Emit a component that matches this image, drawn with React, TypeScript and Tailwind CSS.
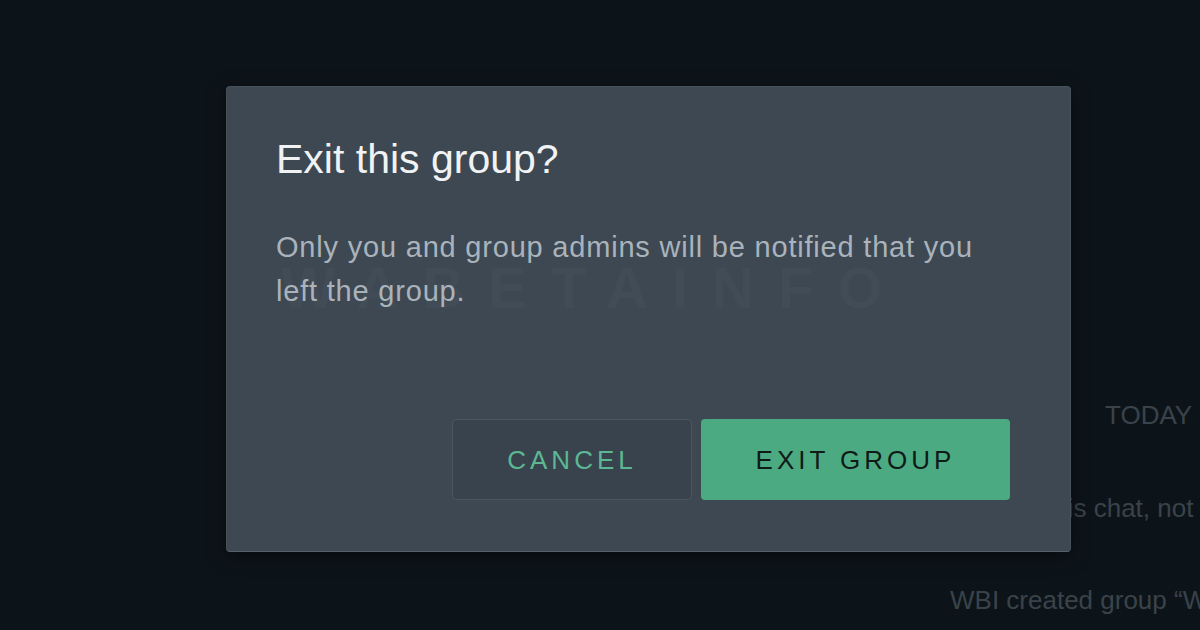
export default function App() {
  return (
    <div
      className="relative w-[1200px] h-[630px] overflow-hidden bg-[#0d1419] text-[#3a434a]"
      style={{ fontFamily: '"Liberation Sans", Arial, sans-serif' }}
    >
      {/* chat behind the overlay */}
      <div className="flex flex-col whitespace-nowrap text-[26px]">
        <div className="pt-[400px] pl-[1105px] leading-[30px]">TODAY</div>
        <div className="pt-[63px] pl-[1046px] leading-[30px]">
          this chat, not even WhatsApp, can read them.
        </div>
        <div className="pt-[62px] pl-[950px] leading-[30px]">
          WBI created group “WBI Beta”
        </div>
      </div>

      {/* dialog */}
      <div className="absolute left-[226px] top-[86px] w-[845px] h-[466px] flex flex-col rounded-[4px] bg-[#3d4852] border border-[#46515b] border-b-[#56616b] shadow-[0_4px_18px_rgba(0,0,0,0.5)] overflow-hidden">
        <div className="absolute left-[54px] top-[172px] text-[58px] font-bold leading-none tracking-[24px] text-[#414c56] select-none">
          WABETAINFO
        </div>
        <div className="relative flex flex-col h-full pl-[49px] pr-[40px] pt-[48px] pb-[51px]">
          <h1 className="text-[41px] leading-[48px] text-[#f0f2f4]">Exit this group?</h1>
          <p className="mt-[42px] text-[29px] leading-[44px] tracking-[0.8px] text-[#aab3bc]">
            Only you and group admins will be notified that you
            <br />
            left the group.
          </p>
          <div className="mt-auto flex justify-end gap-[9px] pr-[20px]">
            <button className="w-[240px] h-[81px] pt-[2px] rounded-[4px] border border-[#4b5661] bg-[#38434d] text-[26px] tracking-[4px] text-[#5cb793]">
              CANCEL
            </button>
            <button className="w-[309px] h-[81px] pt-[2px] rounded-[4px] bg-[#4caa83] text-[26px] tracking-[4px] text-[#0f1b16]">
              EXIT GROUP
            </button>
          </div>
        </div>
      </div>
    </div>
  );
}
